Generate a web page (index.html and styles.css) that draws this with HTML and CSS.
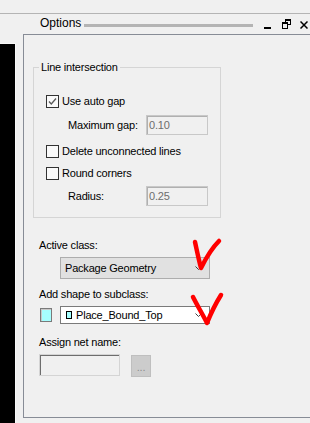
FILE: index.html
```html
<!DOCTYPE html>
<html>
<head>
<meta charset="utf-8">
<link rel="stylesheet" href="styles.css">
</head>
<body>
<div class="topline"></div>
<div class="main">
  <div class="side"><div class="black"></div></div>
  <div class="dock">
    <div class="titlebar">
      <span class="title">Options</span>
      <span class="grip"></span>
      <svg class="ico-min" width="7" height="2" viewBox="0 0 7 2"><rect x="0" y="0" width="7" height="2" fill="#000"/></svg>
      <svg class="ico-restore" width="9" height="10" viewBox="0 0 9 10" shape-rendering="crispEdges">
        <rect x="3" y="0" width="6" height="2" fill="#000"/>
        <rect x="8" y="0" width="1" height="6" fill="#000"/>
        <rect x="3" y="0" width="1" height="3" fill="#000"/>
        <rect x="6" y="5" width="3" height="1" fill="#000"/>
        <rect x="0" y="3" width="6" height="2" fill="#000"/>
        <rect x="0" y="3" width="1" height="7" fill="#000"/>
        <rect x="5" y="3" width="1" height="7" fill="#000"/>
        <rect x="0" y="9" width="6" height="1" fill="#000"/>
      </svg>
      <svg class="ico-close" width="8" height="8" viewBox="0 0 8 8"><path d="M0.5 0.5 L7.5 7.5 M7.5 0.5 L0.5 7.5" stroke="#000" stroke-width="1.5" fill="none"/></svg>
    </div>
    <div class="panel">
      <fieldset class="group">
        <legend>Line intersection</legend>
        <div class="gbody">
          <div class="chk-row">
            <span class="chk"><svg width="11" height="11" viewBox="0 0 11 11"><path d="M2 5.5 L4.3 8 L9 2.5" stroke="#5a5a5a" stroke-width="1.3" fill="none"/></svg></span>
            <span class="chk-text">Use auto gap</span>
          </div>
          <div class="field-row r-gap">
            <span class="flabel">Maximum gap:</span>
            <span class="num">0.10</span>
          </div>
          <div class="chk-row r-del">
            <span class="chk"></span>
            <span class="chk-text">Delete unconnected lines</span>
          </div>
          <div class="chk-row r-round">
            <span class="chk"></span>
            <span class="chk-text">Round corners</span>
          </div>
          <div class="field-row r-rad">
            <span class="flabel">Radius:</span>
            <span class="num">0.25</span>
          </div>
        </div>
      </fieldset>

      <div class="label l-active">Active class:</div>
      <div class="combo combo-gray">
        <span class="combo-text">Package Geometry</span>
        <svg class="arrow" width="7" height="4" viewBox="0 0 7 4"><path d="M0.5 0.5 L3.5 3.5 L6.5 0.5" stroke="#404040" stroke-width="1" fill="none"/></svg>
      </div>

      <div class="label l-sub">Add shape to subclass:</div>
      <div class="sub-row">
        <span class="colorbox"></span>
        <div class="combo combo-white">
          <span class="swatch"></span>
          <span class="combo-text tight">Place_Bound_Top</span>
          <svg class="arrow" width="7" height="4" viewBox="0 0 7 4"><path d="M0.5 0.5 L3.5 3.5 L6.5 0.5" stroke="#404040" stroke-width="1" fill="none"/></svg>
        </div>
      </div>

      <div class="label l-net">Assign net name:</div>
      <div class="net-row">
        <span class="netbox"></span>
        <span class="dots">...</span>
      </div>
    </div>
  </div>
</div>
<svg class="marks" width="310" height="423" viewBox="0 0 310 423">
  <path d="M195 242 C197 251, 199 261, 201 268 C206 258, 212 248, 219 241" stroke="#ff0000" stroke-width="4.5" stroke-linecap="round" stroke-linejoin="round" fill="none"/>
  <path d="M193 297 C197 305, 203 315, 207 323 C211 313, 216 303, 221 295" stroke="#ff0000" stroke-width="4.5" stroke-linecap="round" stroke-linejoin="round" fill="none"/>
</svg>
</body>
</html>
```
FILE: styles.css
```css
html, body {
  margin: 0;
  padding: 0;
  height: 423px;
  overflow: hidden;
}
body {
  background: #f0f0f0;
  font-family: "Liberation Sans", Arial, sans-serif;
  font-size: 11px;
  line-height: 13px;
  letter-spacing: -0.2px;
  color: #000;
  position: relative;
  display: flex;
  flex-direction: column;
}
.topline {
  flex: none;
  height: 13px;
  border-bottom: 1px solid #b4b4b4;
}
.main {
  flex: 1;
  display: flex;
  min-height: 0;
}
.side {
  flex: none;
  width: 23px;
  padding-top: 29px;
  box-sizing: border-box;
  display: flex;
  flex-direction: column;
}
.black {
  flex: 1;
  width: 15px;
  background: #000;
  border-top: 1px solid #f8f8f8;
  border-right: 1px solid #f8f8f8;
}
.dock {
  flex: 1;
  min-width: 0;
  display: flex;
  flex-direction: column;
  padding-bottom: 5px;
}
.titlebar {
  flex: none;
  height: 20px;
  display: flex;
  align-items: flex-start;
  padding-left: 17px;
  padding-right: 2px;
}
.title {
  font-size: 12px;
  line-height: 14px;
  letter-spacing: 0;
  margin-top: 2px;
}
.grip {
  flex: 1;
  height: 3px;
  background: #b4b4b4;
  margin: 10px 0 0 3px;
}
.ico-min { margin: 13px 0 0 11px; flex: none; }
.ico-restore { margin: 5px 0 0 11px; flex: none; }
.ico-close { margin: 7px 0 0 9px; flex: none; }

.panel {
  flex: 1;
  border-top: 1px solid #878c96;
  border-left: 1px solid #878c96;
  border-bottom: 1px solid #878c96;
  padding-left: 9px;
  display: flex;
  flex-direction: column;
  align-items: flex-start;
}
.group {
  margin: 26px 0 0 0;
  padding: 0;
  width: 188px;
  box-sizing: border-box;
  border: 1px solid #d5d5d5;
  min-inline-size: 0;
}
.group legend {
  margin-left: 5px;
  padding: 0 2px;
  line-height: 13px;
}
.gbody {
  padding: 21px 0 11px 12px;
}
.chk-row {
  display: flex;
  align-items: center;
  height: 13px;
}
.chk {
  width: 13px;
  height: 13px;
  box-sizing: border-box;
  border: 1px solid #333;
  background: #fafafa;
  display: flex;
  align-items: center;
  justify-content: center;
  flex: none;
}
.chk-text { margin-left: 3px; }
.r-del { margin-top: 10px; }
.r-round { margin-top: 9px; }
.field-row {
  display: flex;
  align-items: center;
  height: 20px;
  margin-left: 22px;
}
.r-gap { margin-top: 7px; }
.r-rad { margin-top: 6px; }
.flabel { width: 78px; flex: none; }
.num {
  width: 62px;
  height: 20px;
  box-sizing: border-box;
  border: 1px solid #c8c8c8;
  box-shadow: inset 1px 1px 0 #b0b0b0;
  color: #6d6d6d;
  padding-left: 2px;
  display: flex;
  align-items: center;
}

.label { margin-left: 6px; }
.l-active { margin-top: 21px; }
.l-sub { margin-top: 9px; }
.l-net { margin-top: 12px; }

.combo {
  width: 150px;
  box-sizing: border-box;
  display: flex;
  align-items: center;
  padding-left: 4px;
  padding-right: 7px;
}
.combo-text { flex: 1; }
.combo-gray {
  margin: 5px 0 0 27px;
  height: 22px;
  background: #e1e1e1;
  border: 1px solid #adadad;
}
.combo-white {
  margin-left: 8px;
  height: 18px;
  background: #fff;
  border: 1px solid #7a7a7a;
}
.sub-row {
  display: flex;
  align-items: center;
  margin-top: 5px;
  height: 18px;
}
.colorbox {
  margin-left: 7px;
  width: 12px;
  height: 14px;
  box-sizing: border-box;
  border: 1px solid #7a7a7a;
  box-shadow: inset 1px 1px 0 #c8c8c8;
  background: #a6ffff;
  flex: none;
}
.swatch {
  width: 6px;
  height: 8px;
  box-sizing: border-box;
  border: 1px solid #000;
  background: #a6ffff;
  margin-left: 1px;
  flex: none;
}
.tight { margin-left: 4px; }
.net-row {
  display: flex;
  align-items: flex-start;
  margin-top: 5px;
  margin-left: 6px;
}
.netbox {
  width: 81px;
  height: 22px;
  box-sizing: border-box;
  border: 1px solid #d4d4d4;
  box-shadow: inset 1px 1px 0 #6d6d6d;
}
.dots {
  margin: 1px 0 0 11px;
  width: 20px;
  height: 22px;
  box-sizing: border-box;
  background: #cccccc;
  border: 1px solid #bfbfbf;
  color: #8d8d8d;
  display: flex;
  align-items: center;
  justify-content: center;
  padding-top: 3px;
}
.marks {
  position: absolute;
  left: 0;
  top: 0;
  pointer-events: none;
}
```
